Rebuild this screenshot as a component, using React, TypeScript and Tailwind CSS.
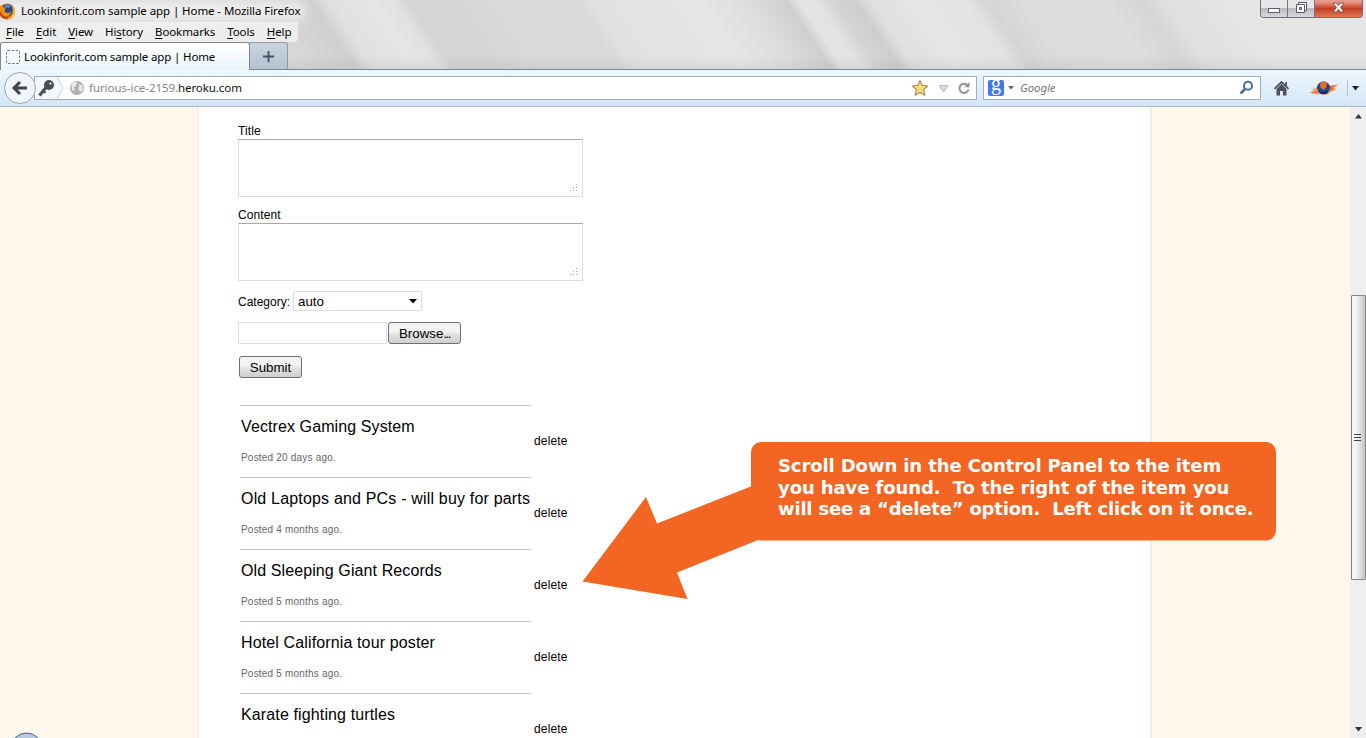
import type { ReactNode } from "react";

const posts = [
  { title: "Vectrex Gaming System", posted: "Posted 20 days ago.", spacing: "tracking-[0.1px]" },
  { title: "Old Laptops and PCs - will buy for parts", posted: "Posted 4 months ago.", spacing: "tracking-[0.18px]" },
  { title: "Old Sleeping Giant Records", posted: "Posted 5 months ago.", spacing: "tracking-[0.1px]" },
  { title: "Hotel California tour poster", posted: "Posted 5 months ago.", spacing: "tracking-[0.13px]" },
  { title: "Karate fighting turtles", spacing: "tracking-[0.13px]" },
];

const glassStops: [number, string][] = [
  [0, "#dedede"], [240, "#dadada"], [290, "#d4d3d3"], [310, "#d1d0d0"], [328, "#e1e1e1"], [370, "#e5e5e5"],
  [392, "#e2e2e2"], [408, "#d5d5d5"], [450, "#d5d5d5"], [500, "#dadada"], [575, "#dadada"],
  [594, "#e2e2e2"], [700, "#e5e5e5"], [745, "#dedede"], [785, "#d0cfcf"], [798, "#e4e4e4"],
  [814, "#e3e3e3"], [834, "#d5d4d4"], [854, "#cfcece"], [870, "#e0e0e0"], [910, "#e5e5e5"], [966, "#e3e3e3"],
  [986, "#d5d5d5"], [1020, "#dcdcdc"], [1105, "#dddddd"], [1142, "#d6d6d6"], [1163, "#e0e0e0"],
  [1230, "#e5e5e5"], [1366, "#e6e6e6"],
];

function GlassBackground() {
  return (
    <svg className="absolute inset-0 -z-10" width="1366" height="69" aria-hidden="true">
      <defs>
        <linearGradient id="glass" gradientUnits="userSpaceOnUse" x1="0" y1="0" x2="1366" y2="0">
          {glassStops.map(([x, c]) => (
            <stop key={x} offset={x / 1366} stopColor={c} />
          ))}
        </linearGradient>
        <linearGradient id="shade" x1="0" y1="0" x2="0" y2="1">
          <stop offset="0.8" stopColor="#000" stopOpacity="0" />
          <stop offset="1" stopColor="#000" stopOpacity="0.05" />
        </linearGradient>
        <filter id="soft" x="-10%" y="-60%" width="120%" height="220%">
          <feGaussianBlur stdDeviation="5" />
        </filter>
      </defs>
      <rect x="-80" y="0" width="1500" height="69" fill="url(#glass)" transform="skewX(34)" />
      <rect x="0" y="2" width="304" height="18" fill="#f0f0f0" opacity=".9" filter="url(#soft)" />
      <rect width="1366" height="69" fill="url(#shade)" />
    </svg>
  );
}

function FirefoxIcon() {
  return (
    <svg width="17" height="17" viewBox="0 0 17 17" aria-hidden="true">
      <circle cx="8" cy="8.500" r="8" fill="#d9670c" />
      <circle cx="8.400" cy="7.200" r="6" fill="#27467f" />
      <path d="M5 2.400C7 .8 10.500 1 12 3L10 5 7 4.500z" fill="#4f86c4" />
      <path d="M0 5C1 3 2 2.400 2.700 1.500l1.500 2.700 3 .4-1.600 2 .7 2.300c1.500 2 4.500 1.200 5.700-1 .5 3-1.500 5.500-5 5.600C3 13.600 0 10 0 5z" fill="#f08a1c" />
      <path d="M13 2.500c3 2.500 4 7 1.500 10.500-2 2.800-5.500 4-9 3 4.500-.3 7-2.500 7.800-5.500.7-2.800.6-5.500-.3-8z" fill="#f9b52d" />
      <path d="M1 9c1 4 4 6 8 6" stroke="#c53e0b" strokeWidth="1.500" fill="none" />
    </svg>
  );
}

function MenuItem({ before = "", letter, after }: { before?: string; letter: string; after: string }) {
  return (
    <span className="whitespace-pre">
      {before}
      <span className="underline underline-offset-2">{letter}</span>
      {after}
    </span>
  );
}

function WindowControls() {
  return (
    <div className="flex h-[18px] w-[103px] overflow-hidden rounded-b-[4px] border border-t-0 border-[#6e6e74] text-white">
      <div className="flex w-[27px] items-center justify-center border-r border-[#77777c] bg-linear-to-b from-[#e7e7e9] from-45% via-[#b9b9bf] via-50% to-[#d6d6dc]">
        <svg width="12" height="18"><rect x=".5" y="8.500" width="11" height="4" fill="#fff" stroke="#5b5d68" /></svg>
      </div>
      <div className="flex w-[27px] items-center justify-center border-r border-[#77777c] bg-linear-to-b from-[#e7e7e9] from-45% via-[#b9b9bf] via-50% to-[#d6d6dc]">
        <svg width="13" height="18" fill="#fff" stroke="#55576a">
          <path d="M3.500 2.500h8v8h-8z" />
          <path d="M1.500 4.500h8v8h-8z" />
          <path d="M4.500 7.500h2v2h-2z" fill="#b7b7bd" />
        </svg>
      </div>
      <div className="flex flex-1 items-center justify-center bg-linear-to-b from-[#e79a8b] from-10% via-[#c63c22] via-50% to-[#df765a]">
        <svg width="13" height="18" viewBox="0 0 13 18">
          <path d="M1 3h3.600l2 2.500 2-2.500H12L8.600 7.500 12 12H8.500l-2-2.500-2 2.500H1l3.400-4.500z" fill="#fff" stroke="#6b3d3a" strokeWidth=".8" />
        </svg>
      </div>
    </div>
  );
}

function BackButton() {
  return (
    <svg className="absolute -left-[32px] -top-[6px]" width="34" height="34" viewBox="0 0 34 34" aria-hidden="true">
      <circle cx="17" cy="17" r="15.500" fill="#f0f6fc" stroke="#9aa7b5" />
      <path d="M17 11l-6 6 6 6M11.500 17H24" fill="none" stroke="#3b4652" strokeWidth="3" />
    </svg>
  );
}

function AddressBar() {
  return (
    <div className="relative ml-[34px] flex h-[24px] w-[943px] items-center border border-[#9fb0bd] bg-white">
      <BackButton />
      <svg className="ml-px shrink-0" width="54" height="22" viewBox="0 0 54 22" aria-hidden="true">
        <path d="M0 0h21l6 11-6 11H0z" fill="#f5f8fb" />
        <path d="M21 0l6 11-6 11" fill="none" stroke="#c4cbd2" />
        <circle cx="13" cy="8" r="5" fill="#4b4f55" />
        <circle cx="14.500" cy="6.500" r="1.100" fill="#f5f8fb" />
        <path d="M10 10.500l-6.500 8" stroke="#4b4f55" strokeWidth="3.200" />
        <path d="M6.500 13l3 3" stroke="#4b4f55" strokeWidth="2" />
        <circle cx="41" cy="11" r="7" fill="#b0b0b0" />
        <path d="M36 7c2-3 5-2 5-1l-1 3-2 1 1 3-2 1c-2-2-2-5-1-7zM43 7l3 1 1 4-2 3-3-2 1-2z" fill="#e9e9e9" />
      </svg>
      <span className="ml-[-1px] grow text-[11.500px] tracking-[-0.07px] text-[#858585]">
        furious-ice-2159.<span className="text-[#111]">heroku.com</span>
      </span>
      <svg className="shrink-0" width="66" height="22" viewBox="0 0 66 22" aria-hidden="true">
        <path d="M10 3.500l2.300 4.900 5.400.6-4 3.700 1.200 5.500L10 15.500l-4.900 2.700 1.200-5.500-4-3.700 5.400-.6z" fill="#f7dc7c" stroke="#a98a4e" strokeWidth="1.100" strokeLinejoin="round" />
        <path d="M29 8.500h9L33.500 15z" fill="#dcdcdc" stroke="#b8b8b8" />
        <path d="M57.500 8.200A4.600 4.600 0 1 0 58.500 12.500" fill="none" stroke="#909499" strokeWidth="2" />
        <path d="M59.500 5v5.300h-5.300z" fill="#909499" />
      </svg>
    </div>
  );
}

function SearchBar() {
  return (
    <div className="ml-[6px] flex h-[24px] w-[278px] items-center border border-[#9fb0bd] bg-white">
      <div className="ml-[4px] flex size-[16px] items-center justify-center rounded-[2px] bg-[#4379f0] font-['Liberation_Serif',serif] text-[20px] leading-[16px] text-white">
        <span className="mt-[-10px]">g</span>
      </div>
      <svg className="ml-[4px]" width="6" height="4"><path d="M0 0h6L3 3.500z" fill="#666" /></svg>
      <span className="ml-[6px] grow text-[11.500px] italic tracking-[-0.1px] text-[#777]">Google</span>
      <svg className="mr-[6px]" width="16" height="16" viewBox="0 0 16 16">
        <circle cx="10" cy="5.800" r="4" fill="none" stroke="#4d7099" strokeWidth="2" />
        <path d="M7 9L2.500 13.500" stroke="#4d7099" strokeWidth="2.600" />
      </svg>
    </div>
  );
}

function ToolbarIcons() {
  return (
    <>
      <svg className="ml-[12px]" width="17" height="16" viewBox="0 0 17 16" aria-hidden="true">
        <path d="M1.500 8.800l7-6.800 7 6.800M13 2v4" fill="none" stroke="#4b5058" strokeWidth="1.800" />
        <path d="M3.500 9l5-5 5 5v6.500H10v-4.500H7v4.500H3.500z" fill="#4b5058" />
      </svg>
      <svg className="ml-[18px]" width="32" height="18" viewBox="0 0 32 18" aria-hidden="true">
        <path d="M1 14l5-3H3l6-3 4-4 7 1 4 2 7-2-5 4 3 1-6 3-4 3-7-1-5 1 1-2z" fill="#f2a07a" />
        <path d="M3 14.500l6-3 1 2-4 1zM22 7l6-1-4 3 2 1-4 2z" fill="#e9672c" />
        <circle cx="15.500" cy="9" r="6.500" fill="#1f4b8c" />
        <path d="M15.500 2l3.500 2.500-1 4-2.500 2.500-3-2.500-.5-4z" fill="#ee6b1d" />
        <path d="M11 12c2 2.500 6 3 9 0" stroke="#0f2c60" strokeWidth="2" fill="none" />
      </svg>
      <div className="ml-[7px] h-[16px] w-px bg-[#b5c4d2]" />
      <svg className="ml-[4px]" width="7" height="5"><path d="M0 0h7L3.500 4.500z" fill="#222" /></svg>
    </>
  );
}

function BrowserChrome() {
  return (
    <header className="relative isolate h-[107px] shrink-0 font-['Noto_Sans','Open_Sans',sans-serif] text-black">
      <GlassBackground />
      <div className="flex h-[22px] items-start">
        <div className="flex h-[22px] grow items-center">
          <div className="ml-[-1px]"><FirefoxIcon /></div>
          <h1 className="ml-[5px] whitespace-pre text-[11.500px] tracking-[-0.08px]">Lookinforit.com sample app | Home - Mozilla Firefox</h1>
        </div>
        <div className="mr-[3px]"><WindowControls /></div>
      </div>
      <nav className="flex h-[20px] w-[298px] items-center gap-[12px] rounded-br-sm bg-[#f2f2f2]/80 pl-[6px] text-[11.500px] tracking-[-0.1px]">
        <MenuItem letter="F" after="ile" />
        <MenuItem letter="E" after="dit" />
        <MenuItem letter="V" after="iew" />
        <MenuItem before="Hi" letter="s" after="tory" />
        <MenuItem letter="B" after="ookmarks" />
        <MenuItem letter="T" after="ools" />
        <MenuItem letter="H" after="elp" />
      </nav>
      <div className="flex h-[27px] items-stretch">
        <div className="z-10 flex h-[28px] w-[250px] items-center rounded-t-[3px] border border-b-0 border-[#7e868f] bg-linear-to-b from-white to-[#eaf5fe] pl-[5px]">
          <svg width="14" height="14"><rect x=".5" y=".5" width="13" height="13" rx="1" fill="none" stroke="#777" strokeDasharray="2.500 1.600" /></svg>
          <span className="ml-[4px] whitespace-pre text-[11.500px] tracking-[-0.15px]">Lookinforit.com sample app | Home</span>
        </div>
        <div className="flex w-[38px] items-center justify-center rounded-tr-[3px] border border-b-0 border-l-0 border-[#929aa5] bg-linear-to-b from-[#c9d4e0] to-[#b4c2d1]">
          <svg width="11" height="11"><path d="M5.500 0v11M0 5.500h11" stroke="#42505f" strokeWidth="1.800" /></svg>
        </div>
      </div>
      <div className="flex h-[38px] items-center border-b border-t border-b-[#a6b7c6] border-t-[#7c8894] bg-linear-to-b from-[#edf7fe] to-[#d5e6f6]">
        <AddressBar />
        <SearchBar />
        <ToolbarIcons />
      </div>
    </header>
  );
}

function ResizeGrip() {
  return (
    <svg width="8" height="8" fill="#a6a6a6" aria-hidden="true">
      <path d="M6 0h1v1H6zM6 3h1v1H6zM6 6h1v1H6zM3 3h1v1H3zM3 6h1v1H3zM0 6h1v1H0z" />
    </svg>
  );
}

function TextBox({ label }: { label: string }) {
  return (
    <div className="h-[84px] w-[345px]">
      <div className="h-[16px] text-[12px] leading-[16px] tracking-[0.1px]">{label}</div>
      <div className="flex h-[58px] items-end justify-end rounded-[1px] border border-[#dcdcdc] border-t-[#a9a9a9] p-[4px]">
        <ResizeGrip />
      </div>
    </div>
  );
}

function PushButton({ children, className }: { children: ReactNode; className: string }) {
  return (
    <div className={`flex h-[22px] items-center justify-center rounded-[3px] border border-[#707070] bg-linear-to-b from-[#f3f3f3] from-45% via-[#e2e2e2] via-55% to-[#cfcfcf] pt-[2px] text-[13.330px] ${className}`}>
      {children}
    </div>
  );
}

function Scrollbar() {
  return (
    <aside className="flex w-[16px] shrink-0 flex-col items-center bg-[#efefef]">
      <svg className="mt-[7px]" width="7" height="5"><path d="M0 4.500h7L3.500 0z" fill="#333" /></svg>
      <div className="mt-[176px] flex h-[285px] w-[15px] items-center justify-center rounded-[1px] border border-[#858585] bg-linear-to-r from-[#f5f5f5] from-30% to-[#c4c4c4] pr-[2px]">
        <svg width="7" height="8"><path d="M0 .5h7M0 3.500h7M0 6.500h7" stroke="#444" /></svg>
      </div>
      <svg className="mt-auto mb-[6px]" width="7" height="5"><path d="M0 0h7L3.500 4.500z" fill="#333" /></svg>
    </aside>
  );
}

function ControlPanel() {
  return (
    <main className="w-[955px] shrink-0 overflow-hidden border-x-2 border-l-[#f6f2e6] border-r-[#f3f0e2] bg-white pl-[39px] pt-[16px] font-['Liberation_Sans',Arial,sans-serif] text-[12px] text-black">
      <TextBox label="Title" />
      <TextBox label="Content" />
      <div className="flex h-[20px] items-center">
        <span className="w-[55px] whitespace-nowrap pt-[2px]">Category:</span>
        <div className="flex h-[20px] w-[129px] items-center justify-between rounded-[1px] border border-[#dcdcdc] pl-[4px] pr-[4px] pt-px text-[13.330px]">
          <span>auto</span>
          <svg width="8" height="5"><path d="M0 0h8L4 4.500z" fill="#000" /></svg>
        </div>
      </div>
      <div className="mt-[11px] flex h-[22px] gap-px">
        <div className="w-[149px] border border-[#dedede]" />
        <PushButton className="w-[73px]">Browse<span className="tracking-[-1.500px]">...</span></PushButton>
      </div>
      <div className="ml-px mt-[12px]">
        <PushButton className="w-[63px]">Submit</PushButton>
      </div>
      <ul className="ml-[2px] mt-[27px]">
        {posts.map((post) => (
          <li key={post.title} className="flex h-[72px]">
            <div className="w-[291px] border-t border-[#c6c6c6] pl-px">
              <h2 className={`mt-[11px] whitespace-nowrap text-[16px] leading-[20px] ${post.spacing}`}>{post.title}</h2>
              {post.posted && (
                <p className="mt-[14px] text-[10px] leading-[14px] tracking-[0.2px] text-[#666]">{post.posted}</p>
              )}
            </div>
            <span className="ml-[3px] mt-[28px] leading-[16px] tracking-[0.15px]">delete</span>
          </li>
        ))}
      </ul>
    </main>
  );
}

function Callout() {
  return (
    <div className="absolute left-[582px] top-[441px] h-[160px] w-[695px]">
      <svg className="absolute inset-0" width="695" height="160" aria-hidden="true">
        <path d="M.5 140.500L64 56l11 26.500L170 45h15v50.500L176 99 95 131.500l10.500 26.500z" fill="#f36523" />
        <rect x="169" y="1" width="525" height="98.500" rx="10" fill="#f36523" />
      </svg>
      <p className="relative whitespace-pre pl-[196px] pt-[14px] font-['DejaVu_Sans',Verdana,sans-serif] text-[18px] font-bold leading-[21.500px] text-white">
        <span className="block tracking-[-0.1px]">Scroll Down in the Control Panel to the item</span>
        <span className="block tracking-[-0.1px]">{"you have found.  To the right of the item you"}</span>
        <span className="block tracking-[-0.2px]">{"will see a “delete” option.  Left click on it once."}</span>
      </p>
    </div>
  );
}

export default function App() {
  return (
    <div className="relative flex h-[738px] w-[1366px] flex-col overflow-hidden bg-[#fff8eb]">
      <BrowserChrome />
      <div className="flex min-h-0 flex-1">
        <div className="flex w-[197px] shrink-0 items-end overflow-hidden">
          <svg className="ml-[12px]" width="30" height="6" aria-hidden="true">
            <circle cx="14.500" cy="17" r="16" fill="#b9cbe3" stroke="#4a5f80" />
          </svg>
        </div>
        <ControlPanel />
        <div className="grow" />
        <Scrollbar />
      </div>
      <Callout />
    </div>
  );
}
